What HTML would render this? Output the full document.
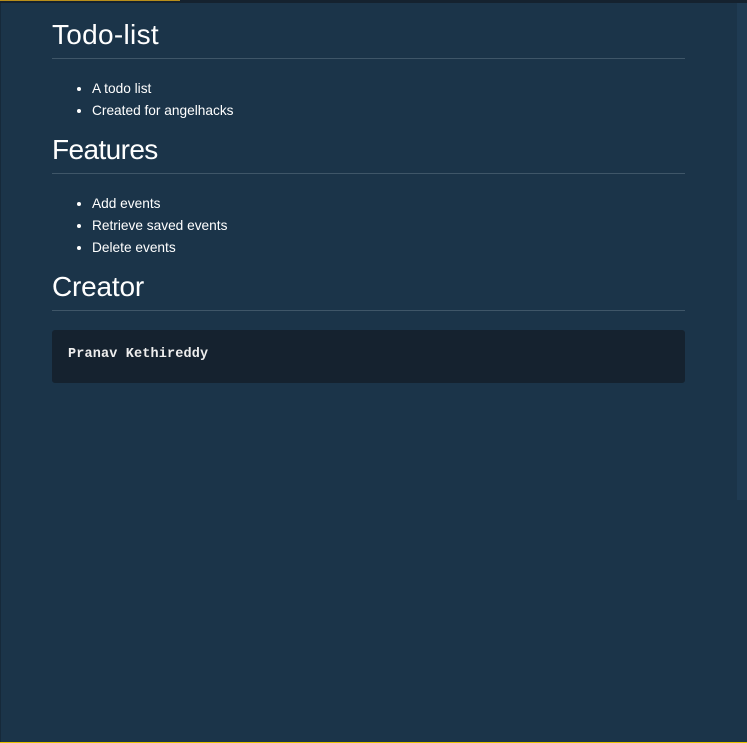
<!DOCTYPE html>
<html><head><style>
html,body{margin:0;padding:0;}
body{width:747px;height:743px;background:#1b3449;position:relative;overflow:hidden;font-family:"Segoe UI","Liberation Sans",sans-serif;color:#fff;}
.top{position:absolute;left:0;top:0;width:747px;height:3px;background:#15222f;}
.top i{position:absolute;left:0;top:0;width:180px;height:1px;background:#b88e1a;}
.thumb{position:absolute;left:737px;top:3px;width:10px;height:497px;background:#1f3b53;}
.bot{position:absolute;left:0;top:742px;width:747px;height:1px;background:#e6c000;}
.lb{position:absolute;left:0;top:3px;width:1px;height:740px;background:#16293a;}
h1{position:absolute;left:52px;width:633px;margin:0;font-weight:400;font-size:28px;line-height:34px;border-bottom:1px solid #3f5668;padding-bottom:6px;}
ul{position:absolute;left:52px;margin:0;padding-left:40px;font-size:13.7px;line-height:22px;}
.code{position:absolute;left:52px;top:330px;width:633px;height:53px;background:#15222f;border-radius:3px;}
.code span{position:absolute;left:16px;top:17px;font-family:"Liberation Mono",monospace;font-weight:bold;font-size:13.5px;letter-spacing:0.15px;color:#eee;}
</style></head><body>
<div class="top"><i></i></div>
<div class="lb"></div>
<div class="thumb"></div>
<h1 style="top:18px;letter-spacing:0.3px">Todo-list</h1>
<ul style="top:78px"><li>A todo list</li><li>Created for angelhacks</li></ul>
<h1 style="top:133px;letter-spacing:-0.6px">Features</h1>
<ul style="top:193px"><li>Add events</li><li>Retrieve saved events</li><li>Delete events</li></ul>
<h1 style="top:270px;letter-spacing:-0.2px">Creator</h1>
<div class="code"><span>Pranav Kethireddy</span></div>
<div class="bot"></div>
</body></html>
